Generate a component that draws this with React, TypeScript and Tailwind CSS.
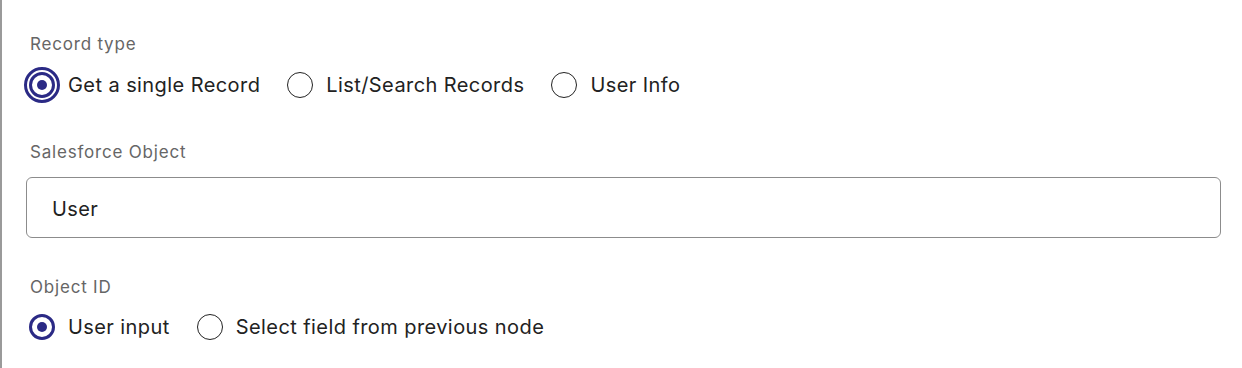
import { useState } from 'react';

type Option = { value: string; label: string };

const recordTypes: Option[] = [
  { value: 'single', label: 'Get a single Record' },
  { value: 'list', label: 'List/Search Records' },
  { value: 'user', label: 'User Info' },
];

const objectIdSources: Option[] = [
  { value: 'input', label: 'User input' },
  { value: 'previous', label: 'Select field from previous node' },
];

function Radio({ checked, focused }: { checked: boolean; focused?: boolean }) {
  return (
    <span
      className={
        focused
          ? 'flex h-9 w-9 shrink-0 items-center justify-center rounded-full border-[3px] border-[#2b2a85]'
          : 'flex h-9 w-9 shrink-0 items-center justify-center rounded-full'
      }
    >
      {checked ? (
        <span className="flex h-[26px] w-[26px] items-center justify-center rounded-full border-[3px] border-[#2b2a85]">
          <span className="h-[10px] w-[10px] rounded-full bg-[#2b2a85]" />
        </span>
      ) : (
        <span className="h-[26px] w-[26px] rounded-full border border-[#222]" />
      )}
    </span>
  );
}

function RadioGroup({
  options,
  value,
  onChange,
  focused,
}: {
  options: Option[];
  value: string;
  onChange: (v: string) => void;
  focused?: boolean;
}) {
  return (
    <div className="flex items-center gap-[22px]">
      {options.map((o) => (
        <button
          key={o.value}
          type="button"
          onClick={() => onChange(o.value)}
          className="flex items-center gap-2"
        >
          <Radio checked={value === o.value} focused={focused && value === o.value} />
          <span className="text-[20px] leading-6 tracking-[0.42px] text-[#222]">{o.label}</span>
        </button>
      ))}
    </div>
  );
}

export default function App() {
  const [recordType, setRecordType] = useState('single');
  const [source, setSource] = useState('input');

  return (
    <div
      className="h-[368px] w-[1242px] border-l-2 border-[#9a9a9a] bg-white"
      style={{ fontFamily: "Inter, 'Noto Sans', sans-serif" }}
    >
      <div className="flex flex-col pl-[22px] pr-[21px] pt-[34px]">
        {/* Record type */}
        <label className="pl-[6px] text-[17px] leading-5 tracking-[0.8px] text-[#666]">Record type</label>
        <div className="mt-[13px]">
          <RadioGroup options={recordTypes} value={recordType} onChange={setRecordType} focused />
        </div>

        {/* Salesforce Object */}
        <label className="mt-[39px] pl-[6px] text-[17px] leading-5 tracking-[0.8px] text-[#666]">
          Salesforce Object
        </label>
        <div className="ml-[2px] mt-[15px] flex h-[61px] items-center rounded-[6px] border border-[#8c8c8c] pl-[25px] pt-[3px]">
          <span className="text-[20px] tracking-[0.42px] text-[#222]">User</span>
        </div>

        {/* Object ID */}
        <label className="mt-[39px] pl-[6px] text-[17px] leading-5 tracking-[0.8px] text-[#666]">Object ID</label>
        <div className="mt-[12px]">
          <RadioGroup options={objectIdSources} value={source} onChange={setSource} />
        </div>
      </div>
    </div>
  );
}
